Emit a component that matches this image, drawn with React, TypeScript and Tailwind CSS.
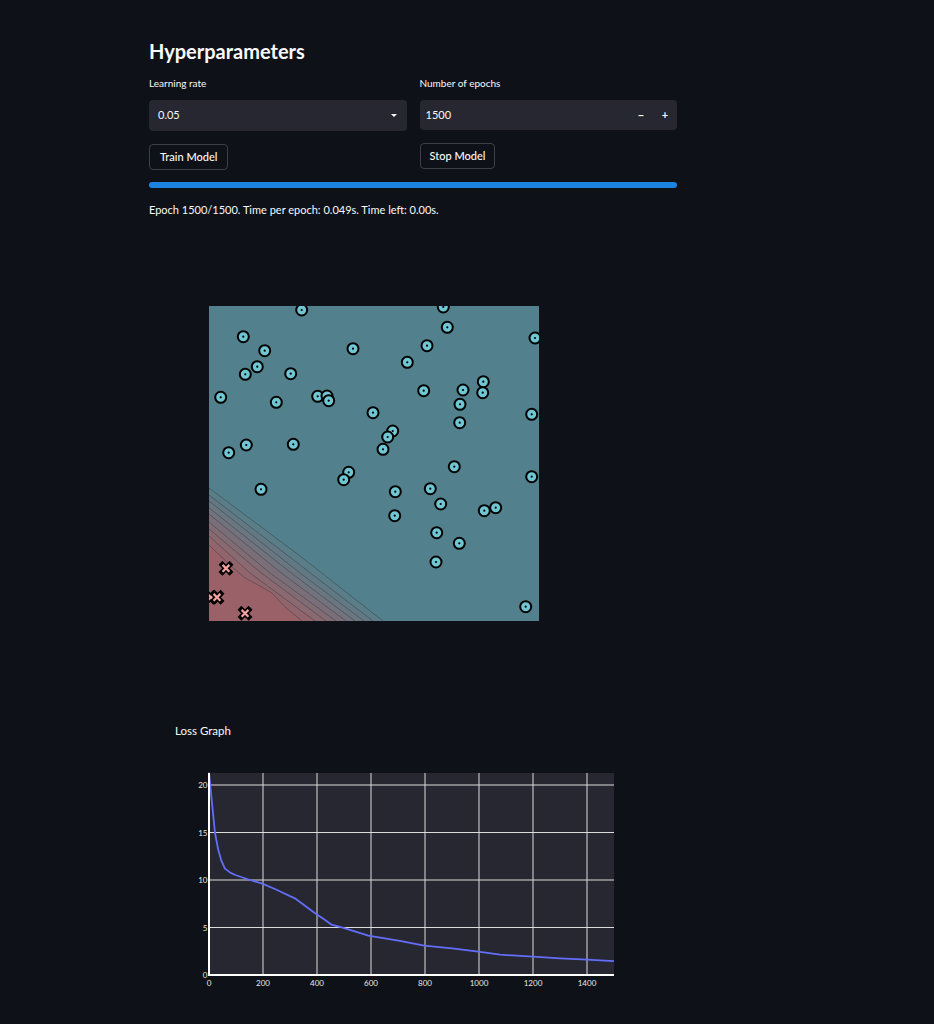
import React from "react";

const circles: [number, number][] = [
  [301.7, 310], [443.3, 307], [243.3, 336.7], [447.3, 327.3], [535, 338],
  [264.7, 350.7], [353, 348.7], [427, 345.7], [257.3, 366.7], [245.3, 374.3],
  [290.7, 373.7], [407.3, 362.3], [220.7, 397.3], [276.3, 402.3], [317.7, 396.3],
  [327, 396], [328.7, 400.7], [423.7, 390.7], [463, 390], [483.3, 381.7],
  [482.7, 392.7], [373, 412.7], [460, 404.3], [531.7, 414.3], [392.7, 431],
  [387.7, 437], [459.7, 422.7], [246.3, 445], [293.3, 444.3], [228.7, 452.7],
  [383, 449.3], [454.3, 466.7], [348.7, 472.3], [343.7, 479.7], [531.7, 476.7],
  [261, 489.3], [430.3, 488.7], [395.3, 491.7], [440.7, 504], [484.3, 510.7],
  [495.7, 507.7], [394.7, 515.7], [436.7, 532.7], [459.3, 543.3], [436, 562],
  [525.7, 606.7],
];

const crosses: [number, number][] = [
  [226, 568.3], [211, 597.3], [217, 597.3], [245, 613.3],
];

// contour lines, outer -> inner
const contours: [number, number][][] = [
  [[209, 488], [300, 556], [383, 621]],
  [[209, 495], [300, 565], [373, 621]],
  [[209, 501], [300, 573], [364, 621]],
  [[209, 508], [290, 572], [355, 621]],
  [[209, 514], [280, 572], [346, 621]],
  [[209, 522], [270, 573], [336, 621]],
  [[209, 529], [260, 572], [326, 621]],
  [[209, 536], [250, 573], [315, 621]],
  [[209, 545], [230, 565], [245, 578], [260, 586], [272, 593], [285, 607], [302, 621]],
];

const teal = [82, 128, 140];
const red = [154, 98, 104];
const mix = (t: number) =>
  `rgb(${teal.map((c, i) => Math.round(c + (red[i] - c) * t)).join(",")})`;

const loss: [number, number][] = [
  [0, 21.3], [8, 19], [15, 17], [22, 15], [34, 13.2], [45, 12.1], [59, 11.2],
  [80, 10.75], [100, 10.5], [152, 10.0], [195, 9.65], [244, 9.05], [318, 8.07],
  [393, 6.5], [430, 5.8], [454, 5.3], [504, 4.9], [590, 4.15], [707, 3.6],
  [797, 3.1], [900, 2.8], [997, 2.45], [1078, 2.14], [1199, 1.93], [1300, 1.75],
  [1399, 1.61], [1500, 1.47],
];
const px = (x: number) => 209 + x * 0.27;
const py = (y: number) => 975 - y * 9.5;

function Scatter() {
  return (
    <svg width={330} height={315} viewBox="209 306 330 315" className="block">
      <rect x={209} y={306} width={330} height={315} fill={mix(0)} />
      {contours.map((line, i) => (
        <polygon
          key={"p" + i}
          points={[...line, [209, 621]].map((p) => p.join(",")).join(" ")}
          fill={mix((i + 1) / contours.length)}
        />
      ))}
      {contours.map((line, i) => (
        <polyline
          key={"l" + i}
          points={line.map((p) => p.join(",")).join(" ")}
          fill="none"
          stroke="rgba(45,55,65,0.55)"
          strokeWidth={0.8}
        />
      ))}
      {circles.map(([x, y], i) => (
        <g key={"c" + i}>
          <circle cx={x} cy={y} r={5.5} fill="#70c7d3" stroke="#000" strokeWidth={2} />
          <circle cx={x} cy={y} r={1.1} fill="#000" />
        </g>
      ))}
      {crosses.map(([x, y], i) => (
        <g key={"x" + i} strokeLinecap="square">
          <path d={`M${x - 3.6} ${y - 3.6}L${x + 3.6} ${y + 3.6}M${x + 3.6} ${y - 3.6}L${x - 3.6} ${y + 3.6}`} stroke="#000" strokeWidth={5.5} />
          <path d={`M${x - 3.4} ${y - 3.4}L${x + 3.4} ${y + 3.4}M${x + 3.4} ${y - 3.4}L${x - 3.4} ${y + 3.4}`} stroke="#f5a3a0" strokeWidth={2.2} strokeLinecap="butt" />
        </g>
      ))}
    </svg>
  );
}

function LossChart() {
  const xt = [0, 200, 400, 600, 800, 1000, 1200, 1400];
  const yt = [0, 5, 10, 15, 20];
  return (
    <svg width={435} height={230} viewBox="190 765 435 230" className="block">
      <rect x={209} y={773} width={405} height={202} fill="#262730" />
      {xt.slice(1).map((v) => (
        <line key={v} x1={px(v)} x2={px(v)} y1={773} y2={975} stroke="#dcdcdc" strokeWidth={1} />
      ))}
      {yt.slice(1).map((v) => (
        <line key={v} x1={209} x2={614} y1={py(v)} y2={py(v)} stroke="#dcdcdc" strokeWidth={1} />
      ))}
      <polyline
        points={loss.map(([x, y]) => `${px(x)},${py(y)}`).join(" ")}
        fill="none"
        stroke="#636efa"
        strokeWidth={1.8}
        strokeLinejoin="round"
      />
      <line x1={209} x2={209} y1={773} y2={976} stroke="#fff" strokeWidth={2} />
      <line x1={208} x2={614} y1={975} y2={975} stroke="#fff" strokeWidth={2} />
      <g fill="#e8e8e8" fontSize={8}>
        {yt.map((v) => (
          <text key={v} x={207.5} y={py(v) + 3} textAnchor="end">{v}</text>
        ))}
        {xt.map((v) => (
          <text key={v} x={px(v)} y={985.5} textAnchor="middle">{v}</text>
        ))}
      </g>
    </svg>
  );
}

export default function App() {
  return (
    <div className="min-h-[1024px] bg-[#0e1117] text-[#fafafa] [font-family:Lato,'Noto_Sans',sans-serif]">
      <div className="ml-[149px] w-[528px] pt-[37px]">
        <h2 className="text-[20px] leading-[28px] font-bold">Hyperparameters</h2>
        <div className="mt-[11px] grid grid-cols-2 gap-x-[13px]">
          <div>
            <p className="text-[10px] leading-[14px]">Learning rate</p>
            <div className="mt-[10px] h-[31px] rounded bg-[#262730] flex items-center justify-between pl-[9px] pr-[10px] text-[11px]">
              <span>0.05</span>
              <span className="w-0 h-0 border-l-[3px] border-r-[3px] border-t-[3px] border-l-transparent border-r-transparent border-t-white" />
            </div>
            <button className="mt-[13px] h-[26px] px-[10px] rounded border border-[#3d4048] bg-[#0e1117] text-[11px] font-medium">
              Train Model
            </button>
          </div>
          <div>
            <p className="text-[10px] leading-[14px]">Number of epochs</p>
            <div className="mt-[10px] h-[30px] rounded bg-[#262730] flex items-center pl-[6px] text-[11px]">
              <span className="flex-1">1500</span>
              <span className="w-[24px] text-center font-bold">−</span>
              <span className="w-[24px] text-center font-bold">+</span>
            </div>
            <button className="mt-[13px] h-[26px] px-[9px] rounded border border-[#3d4048] bg-[#0e1117] text-[11px] font-medium">
              Stop Model
            </button>
          </div>
        </div>
        <div className="mt-[12px] h-[6px] rounded-full bg-[#1c83e1]" />
        <p className="mt-[15px] text-[11px] leading-[14px]">
          Epoch 1500/1500. Time per epoch: 0.049s. Time left: 0.00s.
        </p>
        <div className="mt-[89px] ml-[60px]">
          <Scatter />
        </div>
        <p className="mt-[102px] ml-[26px] text-[11.5px] leading-[16px]">Loss Graph</p>
        <div className="mt-[26px] ml-[41px]">
          <LossChart />
        </div>
      </div>
    </div>
  );
}
